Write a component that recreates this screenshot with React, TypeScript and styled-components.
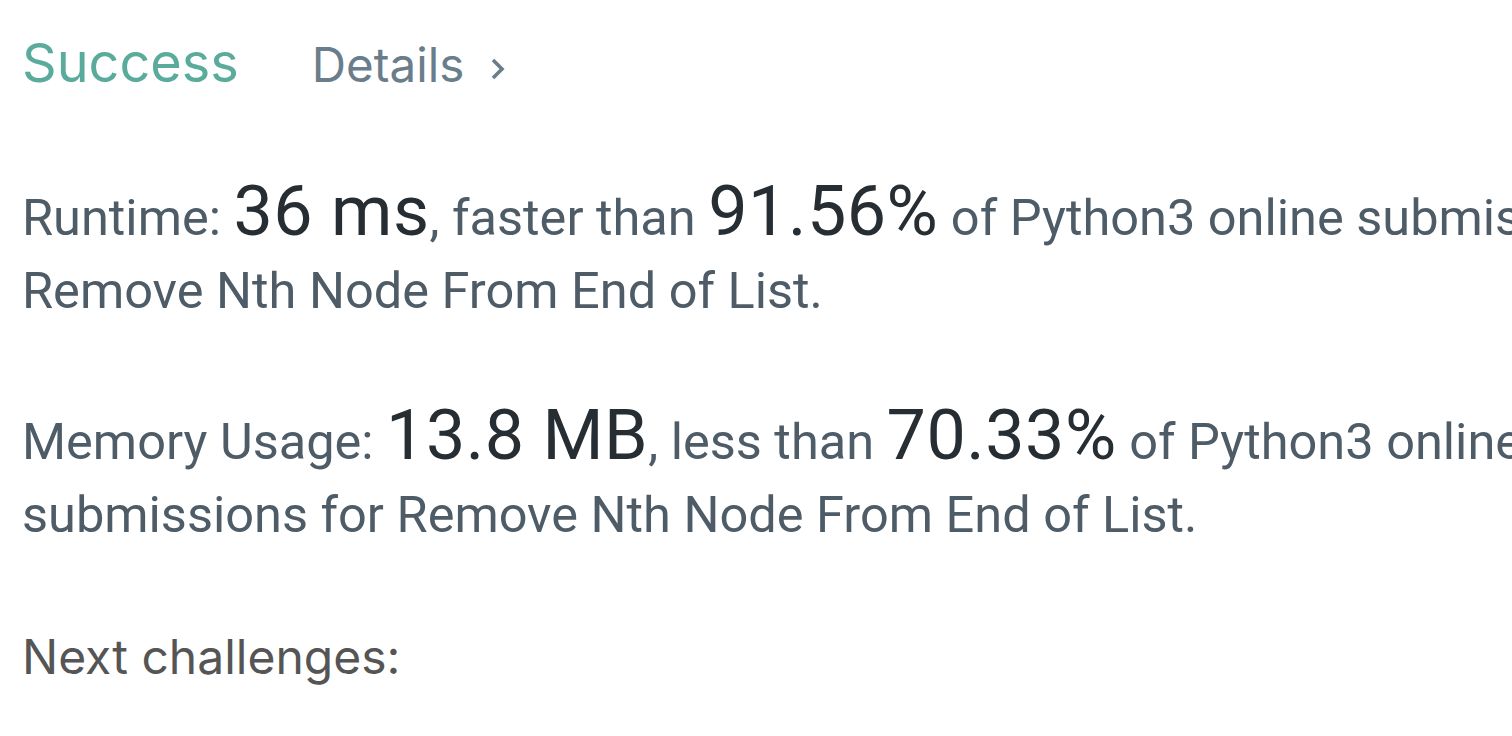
import React from "react";
import styled, { createGlobalStyle } from "styled-components";

const GlobalStyle = createGlobalStyle`
  html {
    overflow: hidden;
  }
  body {
    margin: 0;
    padding: 0;
    background: #ffffff;
  }
`;

const Page = styled.div`
  padding: 36px 0 48px 22px;
  font-family: Inter, "Noto Sans", sans-serif;
`;

const Header = styled.div`
  display: flex;
  align-items: baseline;
  gap: 73px;
  height: 54px;
`;

const Status = styled.div`
  font-size: 54px;
  color: #5aab9b;
  line-height: 1;
`;

const DetailsLink = styled.a`
  display: inline-flex;
  align-items: center;
  gap: 24px;
  font-size: 47.5px;
  color: #6a7d8a;
  text-decoration: none;
  line-height: 1;

  svg {
    margin-top: 8px;
  }
`;

const Stats = styled.div`
  display: flex;
  flex-direction: column;
  gap: 78px;
  margin-top: 91px;
`;

const Stat = styled.p`
  margin: 0;
  font-family: Roboto, "Noto Sans", sans-serif;
  font-size: 50.5px;
  line-height: 73px;
  color: #4e5c68;
  white-space: nowrap;
`;

const Big = styled.span`
  font-size: 70px;
  line-height: 0;
  letter-spacing: 0.5px;
  color: #262e33;
`;

const NextTitle = styled.div`
  margin-top: 77px;
  font-size: 48px;
  line-height: 58px;
  color: #555555;
`;

const App = () => {
  return (
    <Page>
      <GlobalStyle />
      <Header>
        <Status>Success</Status>
        <DetailsLink href="#">
          Details
          <svg width="20" height="28" viewBox="0 0 20 28" fill="none">
            <path d="M5 5 L14 14 L5 23" stroke="#6a7d8a" strokeWidth="3.6" />
          </svg>
        </DetailsLink>
      </Header>
      <Stats>
        <Stat>
          Runtime: <Big>36 ms</Big>, faster than <Big>91.56%</Big> of Python3 online submissions for
          <br />
          Remove Nth Node From End of List.
        </Stat>
        <Stat>
          Memory Usage: <Big>13.8 MB</Big>, less than <Big>70.33%</Big> of Python3 online
          <br />
          submissions for Remove Nth Node From End of List.
        </Stat>
      </Stats>
      <NextTitle>Next challenges:</NextTitle>
    </Page>
  );
};

export default App;
